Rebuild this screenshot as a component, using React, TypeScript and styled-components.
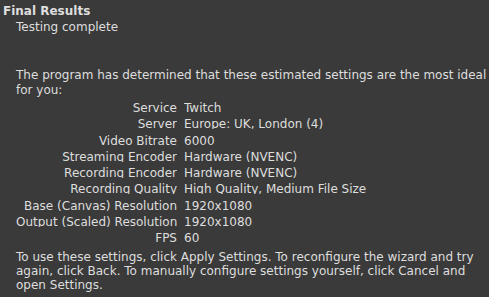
import React from "react";
import styled, { createGlobalStyle } from "styled-components";

const GlobalStyle = createGlobalStyle`
  html, body {
    margin: 0;
    padding: 0;
    background: #3a3a3a;
  }
  body {
    font-family: "DejaVu Sans", sans-serif;
    font-size: 12px;
    color: #dedede;
  }
`;

const rows: [string, string][] = [
  ["Service", "Twitch"],
  ["Server", "Europe: UK, London (4)"],
  ["Video Bitrate", "6000"],
  ["Streaming Encoder", "Hardware (NVENC)"],
  ["Recording Encoder", "Hardware (NVENC)"],
  ["Recording Quality", "High Quality, Medium File Size"],
  ["Base (Canvas) Resolution", "1920x1080"],
  ["Output (Scaled) Resolution", "1920x1080"],
  ["FPS", "60"],
];

const App = () => {
  return (
    <Page>
      <GlobalStyle />
      <Title>Final Results</Title>
      <Body>
        <Subtitle>Testing complete</Subtitle>
        <Intro>
          The program has determined that these estimated settings are the most ideal
          for you:
        </Intro>
        <Table>
          {rows.map(([label, value]) => (
            <React.Fragment key={label}>
              <Label>{label}</Label>
              <Value>{value}</Value>
            </React.Fragment>
          ))}
        </Table>
        <Footer>
          To use these settings, click Apply Settings. To reconfigure the wizard and try
          again, click Back. To manually configure settings yourself, click Cancel and
          open Settings.
        </Footer>
      </Body>
    </Page>
  );
};

const Page = styled.div`
  width: 489px;
  height: 297px;
  overflow: hidden;
  box-sizing: border-box;
  padding-top: 4px;
`;
const Title = styled.div`
  font-weight: bold;
  line-height: 14px;
  padding-left: 3px;
`;
const Body = styled.div`
  padding-left: 16px;
`;
const Subtitle = styled.div`
  line-height: 14px;
  margin-top: 2px;
`;
const Intro = styled.p`
  margin: 34px 0 0 0;
  line-height: 15px;
`;
const Table = styled.div`
  display: grid;
  grid-template-columns: 161px auto;
  column-gap: 7px;
  row-gap: 4.3px;
  margin-top: 3px;
`;
const Cell = styled.div`
  height: 12px;
  line-height: 14px;
  overflow: hidden;
  white-space: nowrap;
`;
const Label = styled(Cell)`
  text-align: right;
`;
const Value = styled(Cell)``;
const Footer = styled.p`
  margin: 7px 0 0 0;
  line-height: 14px;
`;

export default App;
